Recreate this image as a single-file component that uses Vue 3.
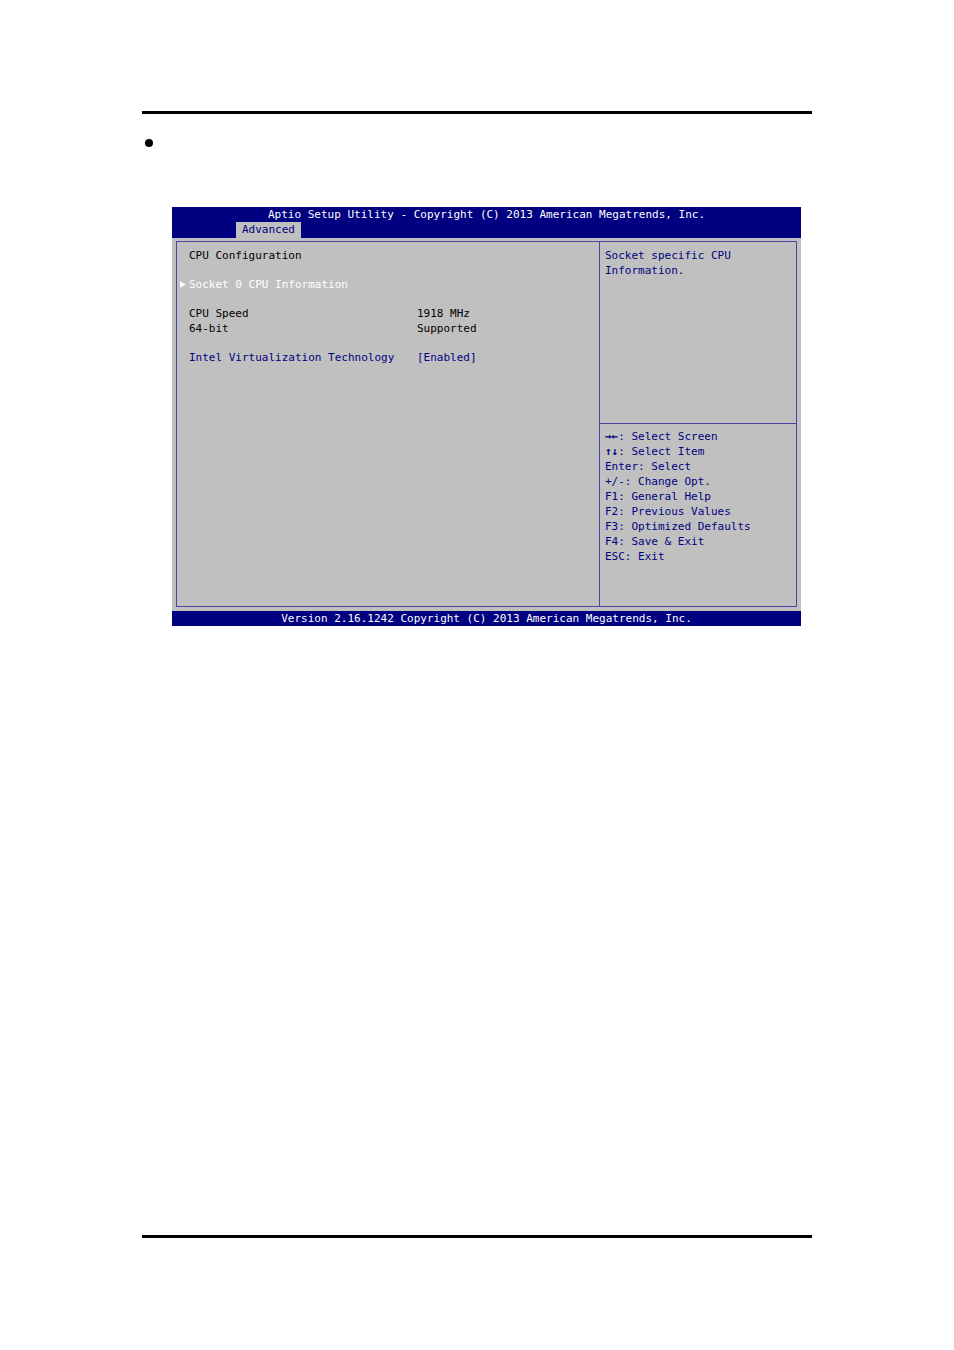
<script setup>
import { ref } from 'vue'

const virtualization = ref('[Enabled]')
const keys = [
  { arrows: '→←', text: ': Select Screen' },
  { arrows: '↑↓', text: ': Select Item' },
  { text: 'Enter: Select' },
  { text: '+/-: Change Opt.' },
  { text: 'F1: General Help' },
  { text: 'F2: Previous Values' },
  { text: 'F3: Optimized Defaults' },
  { text: 'F4: Save & Exit' },
  { text: 'ESC: Exit' },
]
</script>

<template>
  <div class="page">
    <main class="sheet">
      <span class="bullet"></span>
      <section class="bios">
        <header class="top">
          <h1 class="title">Aptio Setup Utility - Copyright (C) 2013 American Megatrends, Inc.</h1>
          <nav class="tabs"><button type="button" class="tab">Advanced</button></nav>
        </header>
        <div class="body">
          <div class="frame">
            <div class="settings">
              <h2 class="heading">CPU Configuration</h2>
              <button type="button" class="submenu">
                <svg class="pointer" viewBox="0 0 6 7" aria-hidden="true"><path d="M0 0.5L6 3.5L0 6.5Z" fill="#fff" /></svg>
                Socket 0 CPU Information
              </button>
              <dl class="facts">
                <dt>CPU Speed</dt><dd>1918 MHz</dd>
                <dt>64-bit</dt><dd>Supported</dd>
              </dl>
              <div class="option">
                <label for="vt">Intel Virtualization Technology</label>
                <select id="vt" v-model="virtualization" class="choice">
                  <option>[Enabled]</option>
                  <option>[Disabled]</option>
                </select>
              </div>
            </div>
            <aside class="side">
              <p class="help">Socket specific CPU<br>Information.</p>
              <ul class="keys">
                <li v-for="k in keys" :key="k.text"><b v-if="k.arrows">{{ k.arrows }}</b>{{ k.text }}</li>
              </ul>
            </aside>
          </div>
        </div>
        <footer class="bottom">Version 2.16.1242 Copyright (C) 2013 American Megatrends, Inc.</footer>
      </section>
    </main>
  </div>
</template>

<style>
body {
  margin: 0;
  background: #fff;
}
</style>

<style scoped>
.page {
  box-sizing: border-box;
  min-height: 100vh;
  padding: 111px 142px 112px;
  display: flex;
  flex-direction: column;
}
.sheet {
  flex: 1;
  border-top: 3px solid #000;
  border-bottom: 3px solid #000;
  padding: 25px 11px 25px 3px;
}
.bullet {
  display: block;
  width: 8px;
  height: 8px;
  border-radius: 50%;
  background: #000;
}
.bios {
  margin: 60px 0 0 27px;
  background: #c0c0c0;
  color: #000080;
  font: 11px/15px "DejaVu Sans Mono", "Liberation Mono", monospace;
}
.bios button,
.bios select {
  appearance: none;
  border: 0;
  margin: 0;
  padding: 0;
  background: none;
  color: inherit;
  font: inherit;
  text-align: left;
}
.top,
.bottom {
  background: #000080;
  color: #fff;
  text-align: center;
}
.title,
.heading {
  margin: 0;
  font: inherit;
}
.tabs {
  display: flex;
  padding-left: 64px;
}
.bios .tab {
  padding: 0 6px 1px;
  background: #c0c0c0;
  color: #000080;
}
.body {
  padding: 3px 4px 4px;
}
.frame {
  display: grid;
  grid-template-columns: 1fr 197px;
  min-height: 364px;
  border: 1px solid #4545a0;
}
.settings {
  display: flex;
  flex-direction: column;
  gap: 14px;
  padding: 6px 0 6px 12px;
  color: #000;
}
.bios .submenu {
  display: flex;
  align-items: center;
  gap: 3px;
  margin-left: -9px;
  color: #fff;
}
.pointer {
  width: 6px;
  height: 7px;
}
.facts,
.option {
  display: grid;
  grid-template-columns: 228px 1fr;
  margin: 0;
}
.facts dd {
  margin: 0;
}
.option {
  color: #000080;
}
.side {
  display: flex;
  flex-direction: column;
  border-left: 1px solid #4545a0;
}
.help {
  min-height: 175px;
  margin: 0;
  padding: 6px 5px 0;
  border-bottom: 1px solid #4545a0;
}
.keys {
  margin: 0;
  padding: 5px;
  list-style: none;
}
</style>
